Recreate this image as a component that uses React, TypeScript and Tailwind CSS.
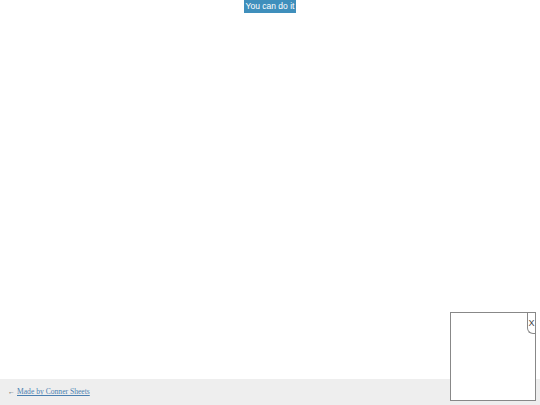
export default function App() {
  return (
    <div className="relative flex min-h-screen flex-col bg-white">
      <div className="flex flex-1 justify-center">
        <button className="h-[13px] w-[52px] bg-[#3f8fbc] text-[8.5px] leading-[13px] text-white [font-family:'Liberation_Sans',sans-serif]">
          You can do it
        </button>
      </div>
      <footer className="flex h-[26px] items-center bg-[#eeeeee] pl-[8px] text-[7.6px] text-[#555] [font-family:'Liberation_Serif',serif]">
        <span className="mr-[2px] text-[7px]">←</span>
        <a href="#" className="text-[#4a7fb0] underline">
          Made by Conner Sheets
        </a>
      </footer>
      <div className="fixed left-[450px] top-[312px] h-[89px] w-[86px] border border-[#888] bg-white">
        <button className="absolute right-0 top-0 flex h-[21px] w-[8px] items-center justify-center rounded-bl-[6px] border-b border-l border-[#888] bg-white text-[9px] leading-none text-[#444] [font-family:'Liberation_Sans',sans-serif]">
          X
        </button>
      </div>
    </div>
  );
}
